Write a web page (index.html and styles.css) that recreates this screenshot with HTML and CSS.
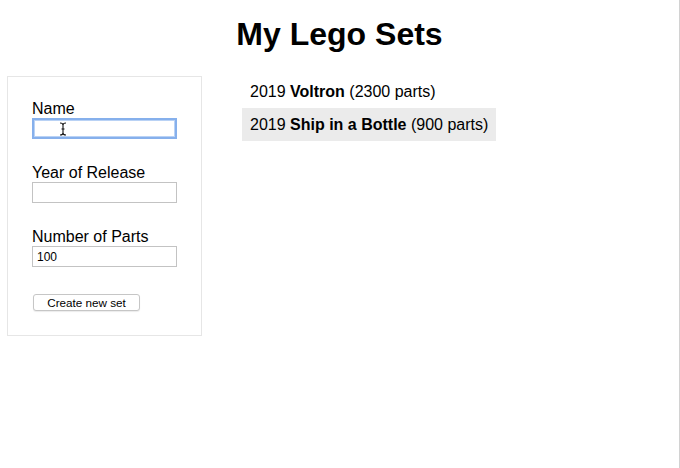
FILE: index.html
```html
<!DOCTYPE html>
<html lang="en">
<head>
<meta charset="utf-8">
<title>My Lego Sets</title>
<link rel="stylesheet" href="styles.css">
</head>
<body>
<div class="page">
  <h1 class="title">My Lego Sets</h1>
  <main class="main">
    <form class="panel">
      <div class="group">
        <label class="label" for="name">Name</label>
        <div class="field-wrap">
          <input class="input focused" id="name" type="text">
          <svg class="ibeam" width="8" height="14" viewBox="0 0 8 14" aria-hidden="true">
            <path d="M1 1 Q4 1 4 3 Q4 1 7 1 M4 3 V11 M1 13 Q4 13 4 11 Q4 13 7 13 M2.5 7 H5.5" fill="none" stroke="#111" stroke-width="1.1"/>
          </svg>
        </div>
      </div>
      <div class="group">
        <label class="label" for="year">Year of Release</label>
        <input class="input" id="year" type="text">
      </div>
      <div class="group">
        <label class="label" for="parts">Number of Parts</label>
        <input class="input" id="parts" type="text" value="100">
      </div>
      <button class="btn" type="button">Create new set</button>
    </form>
    <ul class="list">
      <li class="item">2019 <b>Voltron</b> (2300 parts)</li>
      <li class="item item-hover">2019 <b>Ship in a Bottle</b> (900 parts)</li>
    </ul>
  </main>
</div>
</body>
</html>
```
FILE: styles.css
```css
html, body {
  margin: 0;
  padding: 0;
  background: #fff;
}
body {
  font-family: "Liberation Sans", Arial, Helvetica, sans-serif;
  color: #000;
}
.page {
  width: 679px;
  min-height: 100vh;
  border-right: 1px solid #d2d2d2;
  box-sizing: content-box;
}
.title {
  margin: 0;
  padding-top: 16px;
  font-size: 32px;
  line-height: 37px;
  font-weight: bold;
  text-align: center;
}
.main {
  display: flex;
  align-items: flex-start;
  gap: 40px;
  margin-top: 23px;
  padding-left: 7px;
}
.panel {
  display: flex;
  flex-direction: column;
  gap: 24px;
  width: 145px;
  padding: 22px 24px 24px 24px;
  border: 1px solid #e6e6e6;
  margin: 0;
}
.group {
  display: flex;
  flex-direction: column;
  gap: 0;
}
.label {
  font-size: 16px;
  line-height: 18px;
  padding-top: 1px;
}
.field-wrap {
  position: relative;
}
.input {
  display: block;
  box-sizing: border-box;
  width: 145px;
  height: 21px;
  margin: 0;
  padding: 1px 4px;
  border: 1px solid #c3c3c3;
  font-family: "Liberation Sans", Arial, sans-serif;
  font-size: 12px;
  color: #000;
  background: #fff;
  outline: none;
}
.focused {
  border: 2px solid #86b0ec;
  box-shadow: inset 0 0 0 1px #b9d2f5;
}
.ibeam {
  position: absolute;
  left: 27px;
  top: 4px;
}
.btn {
  align-self: flex-start;
  margin: 3px 0 0 1px;
  width: 107px;
  height: 17px;
  padding: 0;
  border: 1px solid #c6c6c6;
  border-radius: 3px;
  background: #fff;
  box-shadow: 0 1px 1px rgba(0, 0, 0, 0.08);
  font-family: "Liberation Sans", Arial, sans-serif;
  font-size: 11.7px;
  line-height: 15px;
  color: #000;
}
.list {
  list-style: none;
  margin: -1px 0 0 0;
  padding: 0;
  display: flex;
  flex-direction: column;
  align-items: flex-start;
}
.item {
  font-size: 16px;
  line-height: 18px;
  padding: 8px 8px 7px 8px;
}
.item-hover {
  background: #ebebeb;
}
```
